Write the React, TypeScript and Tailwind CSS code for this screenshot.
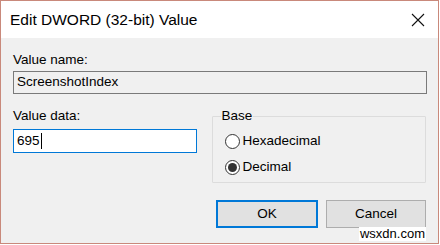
export default function App() {
  return (
    <div className="w-[440px] h-[245px] bg-white">
      <div
        className="w-[439px] h-[244px] border border-[#c9897b] bg-[#f0f0f0] flex flex-col text-black"
        style={{ fontFamily: '"Liberation Sans", Arial, sans-serif' }}
      >
        {/* title bar */}
        <div className="h-[37px] bg-white flex items-center justify-between pl-[9px] pr-[12px] shrink-0">
          <span className="text-[15.5px]">Edit DWORD (32-bit) Value</span>
          <svg width="14" height="14" viewBox="0 0 14 14" className="mr-[1px]">
            <path d="M1 1 L13 13 M13 1 L1 13" stroke="#111" strokeWidth="1.1" />
          </svg>
        </div>

        <div className="px-[12px] text-[13.5px]">
          <div className="mt-[14px] leading-[16px]">Value name:</div>
          <div className="mt-[3px] h-[23px] w-[414px] border border-[#7a7a7a] bg-[#f0f0f0] px-[3px] flex items-center">
            ScreenshotIndex
          </div>

          <div className="flex mt-[14px]">
            <div className="w-[199px]">
              <div className="leading-[16px]">Value data:</div>
              <div className="mt-[5px] h-[24px] w-[184px] border border-[#0078d7] bg-white px-[3px] flex items-center">
                <span>695</span>
                <span className="w-px h-[16px] bg-black ml-px" />
              </div>
            </div>

            <div className="relative mt-[8px] w-[215px] h-[67px] border border-[#dcdcdc] rounded-[1px]">
              <span className="absolute -top-[9px] left-[8px] px-[1px] bg-[#f0f0f0] leading-[16px]">Base</span>
              <div className="flex flex-col pl-[12px] pt-[16px] gap-[10px]">
                <label className="flex items-center gap-[3px] leading-[16px]">
                  <span className="w-[15px] h-[15px] rounded-full border border-[#333] bg-white" />
                  Hexadecimal
                </label>
                <label className="flex items-center gap-[3px] leading-[16px]">
                  <span className="w-[15px] h-[15px] rounded-full border border-[#333] bg-white flex items-center justify-center">
                    <span className="w-[9px] h-[9px] rounded-full bg-[#333]" />
                  </span>
                  Decimal
                </label>
              </div>
            </div>
          </div>

          <div className="flex justify-end gap-[8px] mt-[17px]">
            <button className="w-[102px] h-[28px] border-2 border-[#0078d7] bg-[#e1e1e1] text-[13.5px]">
              OK
            </button>
            <button className="w-[100px] h-[28px] border border-[#adadad] bg-[#e1e1e1] text-[13.5px]">
              Cancel
            </button>
          </div>
          <div className="flex justify-end -mt-[1px]">
            <span className="text-[13px] leading-[14px] bg-white px-[1px]">wsxdn.com</span>
          </div>
        </div>
      </div>
    </div>
  );
}
